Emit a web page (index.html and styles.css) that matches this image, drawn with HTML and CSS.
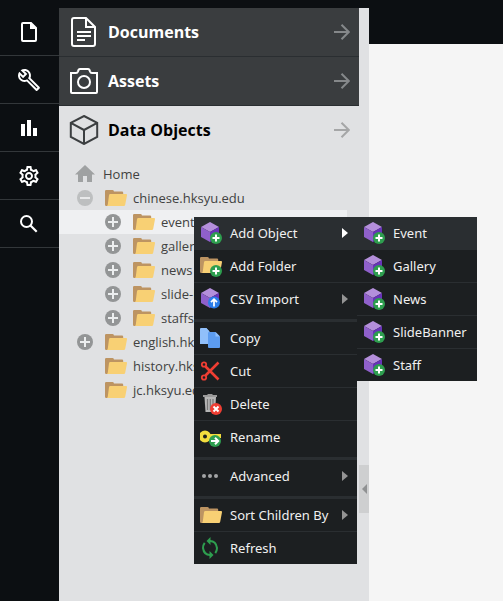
FILE: index.html
```
<!DOCTYPE html>
<html lang="en">
<head>
<meta charset="utf-8">
<title>Data Objects</title>
<link rel="stylesheet" href="styles.css">
</head>
<body>
<svg class="sprite" aria-hidden="true">
  <symbol id="folder" viewBox="0 0 22 16">
    <path fill="#bd9462" d="M0 1.2Q0 0 1.2 0H7.5Q8.6 0 9 1.4H17Q18.2 1.4 18.2 2.8V6L4 16H1.2Q0 16 0 14.8Z"/>
    <path fill="#f8d074" d="M5.3 4H21Q22.2 4 22 5.2L20.2 14.8Q20 16 18.8 16H2Q2.6 15.6 2.8 14.6L4 5.2Q4.2 4 5.3 4Z"/>
  </symbol>
  <symbol id="plus-badge" viewBox="0 0 12 12">
    <circle cx="6" cy="6" r="6" fill="#2e9e4f"/>
    <path d="M6 2.5V9.5M2.5 6H9.5" stroke="#fff" stroke-width="2"/>
  </symbol>
  <symbol id="cube" viewBox="0 0 22 22">
    <path fill="#b48fdb" d="M10 0L19 5L10 10L1 5Z"/>
    <path fill="#8f60cb" d="M1 5L10 10V20L1 15Z"/>
    <path fill="#6833b8" d="M19 5L10 10V20L19 15Z"/>
  </symbol>
  <symbol id="cube-add" viewBox="0 0 22 22">
    <use href="#cube" width="22" height="22"/>
    <use href="#plus-badge" x="10" y="10" width="12" height="12"/>
  </symbol>
  <symbol id="expand" viewBox="0 0 16 16">
    <circle cx="8" cy="8" r="8" fill="#939596"/>
    <path d="M8 3V13M3 8H13" stroke="#eceeef" stroke-width="2"/>
  </symbol>
  <symbol id="collapse" viewBox="0 0 16 16">
    <circle cx="8" cy="8" r="8" fill="#bdbfc0"/>
    <path d="M3 8H13" stroke="#e8e9ea" stroke-width="2"/>
  </symbol>
  <symbol id="arrow" viewBox="0 0 16 16">
    <path d="M0 8H15M7.5 .7L14.8 8L7.5 15.3" fill="none" stroke="currentColor" stroke-width="2"/>
  </symbol>
  <symbol id="caret" viewBox="0 0 6 10"><path d="M0 0L6 5L0 10Z" fill="currentColor"/></symbol>
</svg>

<div class="app">
  <nav class="rail" aria-label="Main">
    <button class="rail-item" aria-label="File">
      <svg viewBox="0 0 24 24"><path d="M6 3H14L19 8V20Q19 21 18 21H6Q5 21 5 20V4Q5 3 6 3Z" fill="none" stroke="#fff" stroke-width="2"/><path d="M13 2L20 9H13Z" fill="#fff"/></svg>
    </button>
    <button class="rail-item" aria-label="Tools">
      <svg viewBox="0 0 24 24"><path fill="#fff" d="M22.61 18.99l-9.08-9.08c.93-2.34.45-5.1-1.44-7C9.79.61 6.21.4 3.66 2.26L7.5 6.11 6.08 7.52 2.25 3.69C.39 6.23.6 9.82 2.9 12.11c1.86 1.86 4.57 2.35 6.89 1.48l9.11 9.11c.39.39 1.02.39 1.41 0l2.3-2.3c.4-.38.4-1.01 0-1.41zm-3 1.6l-9.46-9.46c-.61.45-1.29.72-2 .82-1.36.2-2.79-.21-3.83-1.25C3.37 9.76 2.93 8.5 3 7.26l3.09 3.09 4.24-4.24-3.09-3.09c1.24-.07 2.49.37 3.44 1.31 1.08 1.08 1.49 2.57 1.24 3.96-.12.71-.42 1.37-.88 1.96l9.45 9.45-.88.89z"/></svg>
    </button>
    <button class="rail-item" aria-label="Reports">
      <svg viewBox="0 0 24 24"><path fill="#fff" d="M4 8H8V20H4ZM10 4H14V20H10ZM16 12H20V20H16Z"/></svg>
    </button>
    <button class="rail-item" aria-label="Settings">
      <svg viewBox="0 0 24 24"><path fill="#fff" d="M19.43 12.98c.04-.32.07-.64.07-.98s-.03-.66-.07-.98l2.11-1.65c.19-.15.24-.42.12-.64l-2-3.46c-.09-.16-.26-.25-.44-.25-.06 0-.12.01-.17.03l-2.49 1c-.52-.4-1.08-.73-1.69-.98l-.38-2.65C14.46 2.18 14.25 2 14 2h-4c-.25 0-.46.18-.49.42l-.38 2.65c-.61.25-1.17.59-1.69.98l-2.49-1c-.06-.02-.12-.03-.18-.03-.17 0-.34.09-.43.25l-2 3.46c-.13.22-.07.49.12.64l2.11 1.65c-.04.32-.07.65-.07.98s.03.66.07.98l-2.11 1.65c-.19.15-.24.42-.12.64l2 3.46c.09.16.26.25.44.25.06 0 .12-.01.17-.03l2.49-1c.52.4 1.08.73 1.69.98l.38 2.65c.03.24.24.42.49.42h4c.25 0 .46-.18.49-.42l.38-2.65c.61-.25 1.17-.59 1.69-.98l2.49 1c.06.02.12.03.18.03.17 0 .34-.09.43-.25l2-3.46c.12-.22.07-.49-.12-.64l-2.11-1.65zm-1.98-1.71c.04.31.05.52.05.73s-.02.43-.05.73l-.14 1.13.89.7 1.08.84-.7 1.21-1.27-.51-1.04-.42-.9.68c-.43.32-.84.56-1.25.73l-1.06.43-.16 1.13-.2 1.35h-1.4l-.19-1.35-.16-1.13-1.06-.43c-.43-.18-.83-.41-1.23-.71l-.91-.7-1.06.43-1.27.51-.7-1.21 1.08-.84.89-.7-.14-1.13c-.03-.31-.05-.54-.05-.74s.02-.43.05-.73l.14-1.13-.89-.7-1.08-.84.7-1.21 1.27.51 1.04.42.9-.68c.43-.32.84-.56 1.25-.73l1.06-.43.16-1.13.2-1.35h1.39l.19 1.35.16 1.13 1.06.43c.43.18.83.41 1.23.71l.91.7 1.06-.43 1.27-.51.7 1.21-1.07.85-.89.7.14 1.13zM12 8c-2.21 0-4 1.79-4 4s1.79 4 4 4 4-1.79 4-4-1.79-4-4-4zm0 6c-1.1 0-2-.9-2-2s.9-2 2-2 2 .9 2 2-.9 2-2 2z"/></svg>
    </button>
    <button class="rail-item" aria-label="Search">
      <svg viewBox="0 0 24 24"><circle cx="9.5" cy="9.5" r="5.5" fill="none" stroke="#fff" stroke-width="2"/><path d="M13.5 13.5L19.7 19.7" stroke="#fff" stroke-width="2.2"/></svg>
    </button>
  </nav>

  <aside class="sidebar">
    <div class="panel">
      <button class="section">
        <svg class="section-icon" viewBox="0 0 30 30" fill="none" stroke="#fff" stroke-width="2"><path d="M5 1H17L26 10V27Q26 29 24 29H5Q3 29 3 27V3Q3 1 5 1ZM17 1V10H26M8 15H22M8 19H22M8 23H16"/></svg>
        <span class="section-title">Documents</span>
        <svg class="section-arrow"><use href="#arrow"/></svg>
      </button>
      <button class="section">
        <svg class="section-icon" viewBox="0 0 30 30" fill="none" stroke="#fff" stroke-width="2"><path d="M2 7H7Q8.500 7 9 5.500Q9.500 3 11 3H19Q20.500 3 21 5.500Q21.500 7 23 7H28Q28 7 28 8V26Q28 27 27 27H3Q2 27 2 26Z"/><circle cx="15" cy="16" r="6"/></svg>
        <span class="section-title">Assets</span>
        <svg class="section-arrow"><use href="#arrow"/></svg>
      </button>
      <button class="section section-open" aria-expanded="true">
        <svg class="section-icon" viewBox="0 0 30 30" fill="none" stroke="#3c3f41" stroke-width="2"><path d="M15 1L28.200 7.800V22L15 29L1.800 22V7.800ZM1.800 7.800L15 15L28.200 7.800M15 15V29"/></svg>
        <span class="section-title">Data Objects</span>
        <svg class="section-arrow"><use href="#arrow"/></svg>
      </button>

      <ul class="tree">
        <li class="node root"><svg class="home" viewBox="0 0 20 18"><path fill="#9fa1a2" d="M10 0L20 9.500H17V17H12V11H8V17H3V9.500H0Z"/></svg><span>Home</span></li>
        <li class="node"><svg class="toggle"><use href="#collapse"/></svg><svg class="folder"><use href="#folder"/></svg><span>chinese.hksyu.edu</span></li>
        <li class="node child selected"><svg class="toggle"><use href="#expand"/></svg><svg class="folder"><use href="#folder"/></svg><span>event</span></li>
        <li class="node child"><svg class="toggle"><use href="#expand"/></svg><svg class="folder"><use href="#folder"/></svg><span>gallery</span></li>
        <li class="node child"><svg class="toggle"><use href="#expand"/></svg><svg class="folder"><use href="#folder"/></svg><span>news</span></li>
        <li class="node child"><svg class="toggle"><use href="#expand"/></svg><svg class="folder"><use href="#folder"/></svg><span>slide-banner</span></li>
        <li class="node child"><svg class="toggle"><use href="#expand"/></svg><svg class="folder"><use href="#folder"/></svg><span>staffs</span></li>
        <li class="node"><svg class="toggle"><use href="#expand"/></svg><svg class="folder"><use href="#folder"/></svg><span>english.hksyu.edu</span></li>
        <li class="node"><svg class="toggle"></svg><svg class="folder"><use href="#folder"/></svg><span>history.hksyu.edu</span></li>
        <li class="node"><svg class="toggle"></svg><svg class="folder"><use href="#folder"/></svg><span>jc.hksyu.edu</span></li>
      </ul>
    </div>
    <button class="splitter" aria-label="Collapse panel"><svg viewBox="0 0 5 10"><path d="M5 0L0 5L5 10Z" fill="#8f9192"/></svg></button>
  </aside>

  <main class="content"></main>
</div>

<div class="menu context-menu" role="menu">
  <div class="group">
    <button class="item active" role="menuitem"><svg class="icon"><use href="#cube-add"/></svg><span>Add Object</span><svg class="caret"><use href="#caret"/></svg></button>
    <button class="item" role="menuitem"><svg class="icon" viewBox="0 0 22 22"><use href="#folder" y="2" width="22" height="16"/><use href="#plus-badge" x="10" y="10" width="12" height="12"/></svg><span>Add Folder</span></button>
    <button class="item" role="menuitem"><svg class="icon" viewBox="0 0 22 22"><use href="#cube" width="22" height="22"/><circle cx="14" cy="14.500" r="6" fill="#2b7de9"/><path d="M14 18.500V12M11 14.200L14 11.200L17 14.200" fill="none" stroke="#fff" stroke-width="1.800"/></svg><span>CSV Import</span><svg class="caret"><use href="#caret"/></svg></button>
  </div>
  <div class="group">
    <button class="item" role="menuitem"><svg class="icon" viewBox="0 0 22 22"><path fill="#90bffa" d="M1 1H6.500L9 4V17H0V2Q0 1 1 1Z"/><path fill="#90bffa" d="M6 1L10 5V17H6Z"/><path fill="#5c9cf0" d="M9 5H15.500L20 9.500V20Q20 21 19 21H9Q8 21 8 20V6Q8 5 9 5Z"/><path fill="#90bffa" d="M15.500 5L20 9.500H15.500Z"/></svg><span>Copy</span></button>
    <button class="item" role="menuitem"><svg class="icon" viewBox="0 0 22 22"><g fill="none" stroke="#ef3e33"><circle cx="4" cy="4.500" r="2.200" stroke-width="1.800"/><circle cx="4" cy="17.500" r="2.200" stroke-width="1.800"/><path stroke-width="2.600" d="M5.500 6.500L18.500 19.500M5.500 15.500L18.500 2.500"/></g></svg><span>Cut</span></button>
    <button class="item" role="menuitem"><svg class="icon" viewBox="0 0 22 22"><path fill="#b6b6b6" d="M4.500 4H16L15 19H5.500Z"/><path fill="#9a9a9a" d="M3 2H17V4H3ZM7.500 1H12.500V2H7.500Z"/><path stroke="#777" stroke-width="1.200" d="M7.500 6V17M10.300 6V17M13 6V12"/><circle cx="16" cy="16" r="6" fill="#ef3e33"/><path d="M13.500 13.500L18.500 18.500M18.500 13.500L13.500 18.500" stroke="#fff" stroke-width="2"/></svg><span>Delete</span></button>
    <button class="item" role="menuitem"><svg class="icon" viewBox="0 0 22 22"><circle cx="5" cy="10.500" r="4" fill="none" stroke="#f3dd3e" stroke-width="4"/><path fill="#f3dd3e" d="M8 8H21V12H8Z"/><circle cx="15" cy="15" r="6" fill="#2e9e4f"/><path d="M11 15H17M15 11.800L18.200 15L15 18.200" fill="none" stroke="#fff" stroke-width="2"/></svg><span>Rename</span></button>
  </div>
  <div class="group">
    <button class="item" role="menuitem"><svg class="icon" viewBox="0 0 22 22" fill="#a3a5a6"><circle cx="4" cy="11" r="2"/><circle cx="10" cy="11" r="2"/><circle cx="16" cy="11" r="2"/></svg><span>Advanced</span><svg class="caret"><use href="#caret"/></svg></button>
  </div>
  <div class="group last">
    <button class="item" role="menuitem"><svg class="icon" viewBox="0 0 22 22"><use href="#folder" y="3" width="22" height="16"/></svg><span>Sort Children By</span><svg class="caret"><use href="#caret"/></svg></button>
    <button class="item" role="menuitem"><svg class="icon" viewBox="0 0 22 22"><g fill="none" stroke="#2e9e4f" stroke-width="2"><path d="M10 4Q16 4 17 11Q17 14 15.300 16.200M10 18Q4 18 3 11Q3 8 4.700 5.800"/></g><path fill="#2e9e4f" d="M10.500 0V8L6.500 4ZM9.500 14V22L13.500 18Z"/></svg><span>Refresh</span></button>
  </div>

  <div class="menu submenu" role="menu">
    <button class="item active" role="menuitem"><svg class="icon"><use href="#cube-add"/></svg><span>Event</span></button>
    <button class="item" role="menuitem"><svg class="icon"><use href="#cube-add"/></svg><span>Gallery</span></button>
    <button class="item" role="menuitem"><svg class="icon"><use href="#cube-add"/></svg><span>News</span></button>
    <button class="item" role="menuitem"><svg class="icon"><use href="#cube-add"/></svg><span>SlideBanner</span></button>
    <button class="item" role="menuitem"><svg class="icon"><use href="#cube-add"/></svg><span>Staff</span></button>
  </div>
</div>
</body>
</html>
```
FILE: styles.css
```
* { box-sizing: border-box; }

body {
  margin: 0;
  background: #0c0f12;
  font-family: "Open Sans", "Noto Sans", sans-serif;
  font-size: 13px;
}

button {
  margin: 0;
  padding: 0;
  border: 0;
  background: none;
  color: inherit;
  font: inherit;
  text-align: left;
}

svg { display: block; flex: none; }

.sprite { position: absolute; width: 0; height: 0; }

.app {
  display: flex;
  min-height: 100vh;
  padding-top: 8px;
}

.rail {
  flex: 0 0 59px;
  display: flex;
  flex-direction: column;
}

.rail-item {
  display: flex;
  align-items: center;
  height: 48px;
  padding-left: 17px;
  border-bottom: 1px solid #33373a;
}

.rail-item svg { width: 24px; height: 24px; }

.sidebar {
  flex: 0 0 310px;
  display: flex;
  background: #e0e1e3;
}

.panel { flex: 1; min-width: 0; }

.section {
  display: flex;
  align-items: center;
  gap: 9px;
  width: 100%;
  height: 49px;
  padding: 0 9px 0 10px;
  border-bottom: 1px solid #2a2e31;
  background: #3a3d3f;
  color: #fff;
  font-size: 16px;
  font-weight: 700;
}

.section-open {
  border-color: transparent;
  background: transparent;
  color: #000;
}

.section-icon { width: 30px; height: 30px; }
.section-title { flex: 1; }
.section-arrow { width: 16px; height: 16px; color: #85888a; }
.section-open .section-arrow { color: #a5a6a7; }

.tree {
  margin: 0;
  padding: 7px 12px 0 0;
  list-style: none;
  color: #414141;
}

.node {
  display: flex;
  align-items: center;
  height: 24px;
  padding-left: 18px;
  white-space: nowrap;
}

.root { gap: 8px; padding-left: 16px; }
.child { padding-left: 46px; }
.selected { background: #eff0f2; }
.home { width: 20px; height: 18px; }
.toggle { width: 16px; height: 16px; margin-right: 12px; }
.folder { width: 22px; height: 16px; margin-right: 6px; }

.splitter {
  display: flex;
  align-items: center;
  justify-content: center;
  align-self: center;
  width: 10px;
  height: 48px;
  margin-top: 368px;
  background: #cecfd0;
}

.splitter svg { width: 5px; height: 10px; }

.content {
  flex: 1;
  margin-top: 36px;
  background: #f5f5f5;
}

.menu {
  position: absolute;
  background: #1c1f21;
  color: #f0f0f0;
  font-family: "Noto Sans", "Open Sans", sans-serif;
}

.context-menu { top: 217px; left: 194px; width: 163px; }
.submenu { top: 0; left: 100%; width: 120px; }

.group + .group {
  margin-top: 3px;
  border-top: 3px solid #2a2e31;
}

.item {
  display: flex;
  align-items: center;
  gap: 8px;
  width: 100%;
  height: 33px;
  padding: 0 9px 0 6px;
  border-bottom: 1px solid #2a2e31;
  white-space: nowrap;
}

.item span { flex: 1; }
.item:last-child { border-color: transparent; }
.last .item:last-child,
.submenu .item:last-child { height: 32px; border-bottom: 0; }
.active { background: #2a2e31; }
.icon { width: 22px; height: 22px; }
.caret { width: 6px; height: 10px; color: #949494; }
.active .caret { color: #fff; }
```
